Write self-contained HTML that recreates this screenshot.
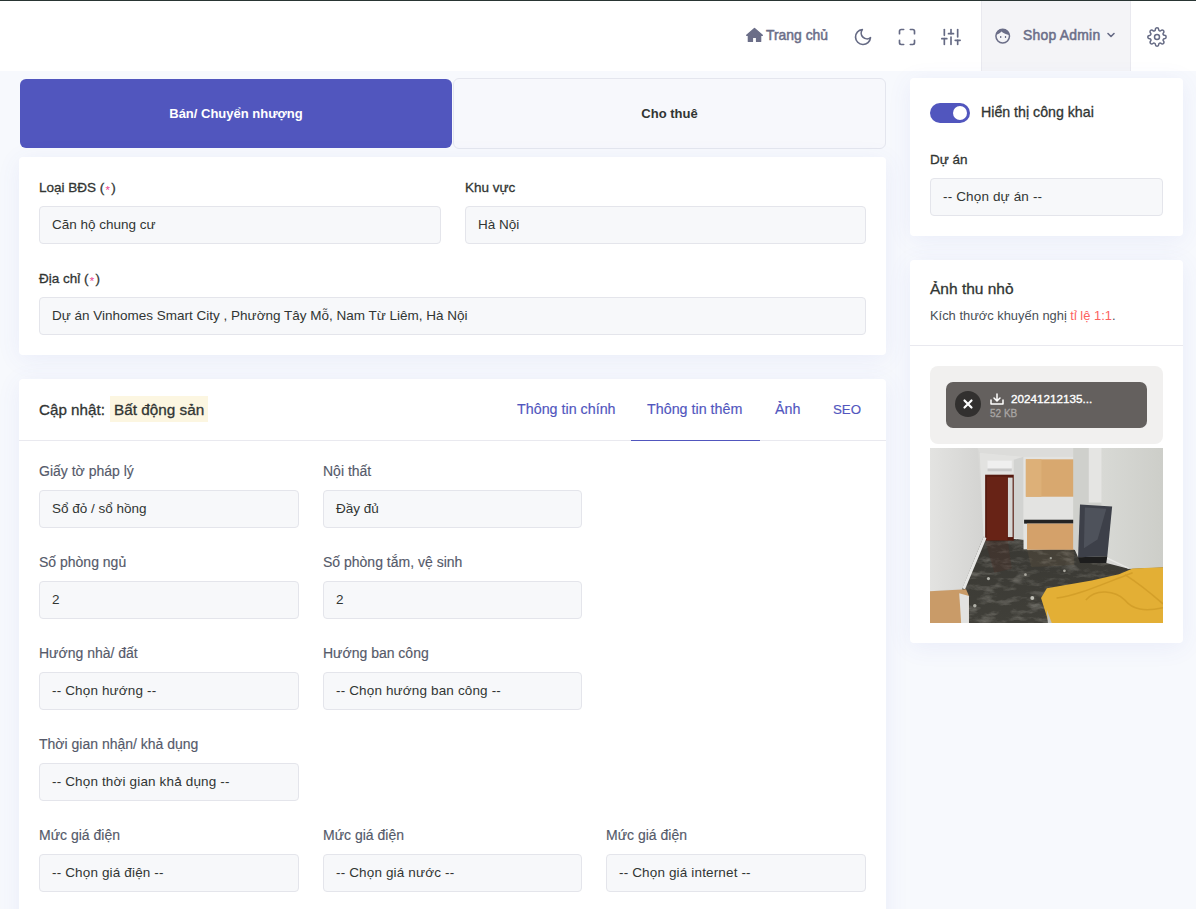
<!DOCTYPE html>
<html lang="vi">
<head>
<meta charset="utf-8">
<title>Cập nhật bất động sản</title>
<style>
*{box-sizing:border-box;margin:0;padding:0}
html,body{width:1196px;height:909px;overflow:hidden}
body{background:#f7f9fd;font-family:"Liberation Sans",sans-serif;color:#313533;position:relative}
.abs{position:absolute}
.topline{left:0;top:0;width:1196px;height:1px;background:#293533}
.header{left:0;top:1px;width:1196px;height:70px;background:#fff}
.hitem{position:absolute;color:#6b6e88;font-weight:400;font-size:13.9px;white-space:nowrap;line-height:16px;-webkit-text-stroke:0.5px #6b6e88}
.ico{position:absolute;fill:none;stroke:#656a84;stroke-width:2;stroke-linecap:round;stroke-linejoin:round}
.userbox{left:981px;top:1px;width:150px;height:70px;background:#f4f4f7;border-left:1px solid #e9e9ef;border-right:1px solid #e9e9ef}
.card{position:absolute;background:#fff;border-radius:4px;box-shadow:0 4px 24px rgba(72,94,200,.08)}
.tabbtn{position:absolute;border-radius:6px;text-align:center;font-weight:700;font-size:13px;white-space:nowrap}
.lbl{position:absolute;font-weight:400;font-size:13.5px;line-height:16px;white-space:nowrap;color:#313533;-webkit-text-stroke:0.3px #313533}
.lbl2{position:absolute;font-weight:400;font-size:14px;line-height:16px;white-space:nowrap;color:#555a6a;-webkit-text-stroke:0.15px #555a6a}
.inp{position:absolute;height:38px;background:#f7f8fa;border:1px solid #e4e5eb;border-radius:4px;font-size:13.5px;line-height:35px;padding-left:12px;color:#313533;white-space:nowrap;overflow:hidden}
.req{color:#e83e8c;font-family:"Liberation Mono",monospace;font-size:11.5px;-webkit-text-stroke:0;position:relative;top:2px}
.ntab{position:absolute;top:401px;font-size:14.3px;line-height:16px;color:#5156be;white-space:nowrap;-webkit-text-stroke:0.15px #5156be}
</style>
</head>
<body>
<div class="abs topline"></div>
<div class="abs header"></div>

<!-- header items -->
<svg class="abs" style="left:745px;top:27px" width="19" height="16" viewBox="0 0 19 16"><path d="M9.5 1.6 L17.3 8.2 L15.6 8.2 L15.6 14.4 L11.6 14.4 L11.6 10.4 L7.4 10.4 L7.4 14.4 L3.4 14.4 L3.4 8.2 L1.7 8.2 Z" fill="#6b6e88" stroke="#6b6e88" stroke-width="1.4" stroke-linejoin="round"/></svg>
<div class="hitem" style="left:766px;top:27px">Trang chủ</div>

<svg class="ico" style="left:853px;top:27px" width="20" height="20" viewBox="0 0 24 24"><path d="M21 12.79A9 9 0 1 1 11.21 3 7 7 0 0 0 21 12.79z"/></svg>
<svg class="ico" style="left:897px;top:27px" width="20" height="20" viewBox="0 0 24 24"><path d="M8 3H5a2 2 0 0 0-2 2v3m18 0V5a2 2 0 0 0-2-2h-3m0 18h3a2 2 0 0 0 2-2v-3M3 16v3a2 2 0 0 0 2 2h3"/></svg>
<svg class="ico" style="left:941px;top:27px" width="20" height="20" viewBox="0 0 24 24"><line x1="4" y1="21" x2="4" y2="14"/><line x1="4" y1="10" x2="4" y2="3"/><line x1="12" y1="21" x2="12" y2="12"/><line x1="12" y1="8" x2="12" y2="3"/><line x1="20" y1="21" x2="20" y2="16"/><line x1="20" y1="12" x2="20" y2="3"/><line x1="1" y1="14" x2="7" y2="14"/><line x1="9" y1="8" x2="15" y2="8"/><line x1="17" y1="16" x2="23" y2="16"/></svg>

<div class="abs userbox"></div>
<svg class="abs" style="left:990px;top:24px" width="28" height="24" viewBox="0 0 28 24"><circle cx="12.7" cy="12.1" r="6.8" fill="none" stroke="#6b6e88" stroke-width="1.5"/><path d="M6.2 10.8 C6.5 7 9 5.3 12.7 5.3 C16.5 5.3 19 7.3 19.3 10.9 C16.5 10.6 13.5 9.6 11.3 7.6 C10 9.3 8.5 10.4 6.2 10.8Z" fill="#6b6e88"/><rect x="10.1" y="12" width="1.2" height="2" fill="#6b6e88"/><rect x="14.9" y="12" width="1.2" height="2" fill="#6b6e88"/></svg>
<div class="hitem" style="left:1023px;top:27px;letter-spacing:.25px">Shop Admin</div>
<svg class="ico" style="left:1106px;top:31px;stroke-width:1.6" width="10" height="8" viewBox="0 0 10 8"><path d="M2 2.5 L5 5.5 L8 2.5"/></svg>
<svg class="ico" style="left:1147px;top:27px;stroke-width:1.8" width="20" height="20" viewBox="0 0 24 24"><circle cx="12" cy="12" r="3"/><path d="M19.4 15a1.65 1.65 0 0 0 .33 1.820l.06.06a2 2 0 0 1 0 2.830 2 2 0 0 1-2.830 0l-.06-.06a1.650 1.650 0 0 0-1.820-.33 1.650 1.650 0 0 0-1 1.510V21a2 2 0 0 1-2 2 2 2 0 0 1-2-2v-.09A1.650 1.650 0 0 0 9 19.4a1.650 1.650 0 0 0-1.820.33l-.06.06a2 2 0 0 1-2.830 0 2 2 0 0 1 0-2.830l.06-.06a1.650 1.650 0 0 0 .33-1.820 1.650 1.650 0 0 0-1.510-1H3a2 2 0 0 1-2-2 2 2 0 0 1 2-2h.09A1.650 1.650 0 0 0 4.6 9a1.650 1.650 0 0 0-.33-1.820l-.06-.06a2 2 0 0 1 0-2.830 2 2 0 0 1 2.830 0l.06.06a1.650 1.650 0 0 0 1.820.33H9a1.650 1.650 0 0 0 1-1.510V3a2 2 0 0 1 2-2 2 2 0 0 1 2 2v.09a1.650 1.650 0 0 0 1 1.510 1.650 1.650 0 0 0 1.820-.33l.06-.06a2 2 0 0 1 2.830 0 2 2 0 0 1 0 2.830l-.06.06a1.650 1.650 0 0 0-.33 1.820V9a1.650 1.650 0 0 0 1.510 1H21a2 2 0 0 1 2 2 2 2 0 0 1-2 2h-.09a1.650 1.650 0 0 0-1.510 1z"/></svg>

<!-- tab buttons -->
<div class="tabbtn" style="left:20px;top:79px;width:432px;height:69px;background:#5156be;color:#fff;line-height:69px">Bán/ Chuyển nhượng</div>
<div class="tabbtn" style="left:453px;top:78px;width:433px;height:71px;background:#f7f8fc;border:1px solid #e4e6ee;color:#313533;line-height:69px">Cho thuê</div>

<!-- card 1 -->
<div class="card" style="left:19px;top:157px;width:867px;height:198px"></div>
<div class="lbl" style="left:39px;top:180px">Loại BĐS (<span class="req">*</span>)</div>
<div class="inp" style="left:39px;top:206px;width:402px">Căn hộ chung cư</div>
<div class="lbl" style="left:465px;top:180px">Khu vực</div>
<div class="inp" style="left:465px;top:206px;width:401px">Hà Nội</div>
<div class="lbl" style="left:39px;top:271px">Địa chỉ (<span class="req">*</span>)</div>
<div class="inp" style="left:39px;top:297px;width:827px">Dự án Vinhomes Smart City , Phường Tây Mỗ, Nam Từ Liêm, Hà Nội</div>

<!-- card 2 -->
<div class="card" style="left:19px;top:379px;width:867px;height:560px"></div>
<div class="abs" style="left:39px;top:400.5px;font-size:15.2px;line-height:18px;white-space:nowrap;-webkit-text-stroke:0.3px #313533">Cập nhật:</div>
<div class="abs" style="left:110px;top:396px;width:98px;height:26px;background:#fcf6e1"></div>
<div class="abs" style="left:114px;top:400.5px;font-size:15.3px;line-height:18px;white-space:nowrap;-webkit-text-stroke:0.3px #313533">Bất động sản</div>
<div class="ntab" style="left:517px">Thông tin chính</div>
<div class="ntab" style="left:647px">Thông tin thêm</div>
<div class="ntab" style="left:775px">Ảnh</div>
<div class="ntab" style="left:833px;font-size:13.3px;top:402px">SEO</div>
<div class="abs" style="left:19px;top:440px;width:867px;height:1px;background:#e9e9ef"></div>
<div class="abs" style="left:631px;top:440px;width:129px;height:1px;background:#5156be"></div>

<div class="lbl2" style="left:39px;top:463px">Giấy tờ pháp lý</div>
<div class="inp" style="left:39px;top:490px;width:260px">Sổ đỏ / sổ hồng</div>
<div class="lbl2" style="left:323px;top:463px">Nội thất</div>
<div class="inp" style="left:323px;top:490px;width:259px">Đầy đủ</div>

<div class="lbl2" style="left:39px;top:554px">Số phòng ngủ</div>
<div class="inp" style="left:39px;top:581px;width:260px">2</div>
<div class="lbl2" style="left:323px;top:554px">Số phòng tắm, vệ sinh</div>
<div class="inp" style="left:323px;top:581px;width:259px">2</div>

<div class="lbl2" style="left:39px;top:645px">Hướng nhà/ đất</div>
<div class="inp" style="left:39px;top:672px;width:260px;letter-spacing:.15px">-- Chọn hướng --</div>
<div class="lbl2" style="left:323px;top:645px">Hướng ban công</div>
<div class="inp" style="left:323px;top:672px;width:259px;letter-spacing:.15px">-- Chọn hướng ban công --</div>

<div class="lbl2" style="left:39px;top:736px">Thời gian nhận/ khả dụng</div>
<div class="inp" style="left:39px;top:763px;width:260px;letter-spacing:.15px">-- Chọn thời gian khả dụng --</div>

<div class="lbl2" style="left:39px;top:827px">Mức giá điện</div>
<div class="inp" style="left:39px;top:854px;width:260px;letter-spacing:.15px">-- Chọn giá điện --</div>
<div class="lbl2" style="left:323px;top:827px">Mức giá điện</div>
<div class="inp" style="left:323px;top:854px;width:259px;letter-spacing:.15px">-- Chọn giá nước --</div>
<div class="lbl2" style="left:606px;top:827px">Mức giá điện</div>
<div class="inp" style="left:606px;top:854px;width:260px;letter-spacing:.15px">-- Chọn giá internet --</div>

<!-- sidebar card 1 -->
<div class="card" style="left:910px;top:78px;width:273px;height:158px"></div>
<div class="abs" style="left:930px;top:103px;width:40px;height:20px;border-radius:10px;background:#5156be"></div>
<div class="abs" style="left:953px;top:106px;width:14px;height:14px;border-radius:7px;background:#fff"></div>
<div class="lbl" style="left:981px;top:104px;font-size:14.2px">Hiển thị công khai</div>
<div class="lbl" style="left:930px;top:152px">Dự án</div>
<div class="inp" style="left:930px;top:178px;width:233px;letter-spacing:.15px">-- Chọn dự án --</div>

<!-- sidebar card 2 -->
<div class="card" style="left:910px;top:260px;width:273px;height:383px"></div>
<div class="abs" style="left:930px;top:279.5px;font-size:15.5px;line-height:18px;white-space:nowrap;-webkit-text-stroke:0.3px #313533">Ảnh thu nhỏ</div>
<div class="abs" style="left:930px;top:307.5px;font-size:12.9px;line-height:16px;white-space:nowrap;color:#495057">Kích thước khuyến nghị <span style="color:#fd625e">tỉ lệ 1:1</span>.</div>
<div class="abs" style="left:910px;top:345px;width:273px;height:1px;background:#e9e9ef"></div>

<div class="abs" style="left:930px;top:366px;width:233px;height:78px;border-radius:8px;background:#f1f0ef"></div>
<div class="abs" style="left:946px;top:382px;width:201px;height:46px;border-radius:7px;background:#64605e"></div>
<div class="abs" style="left:955px;top:391px;width:26px;height:26px;border-radius:13px;background:#32302f"></div>
<svg class="abs" style="left:955px;top:391px" width="26" height="26" viewBox="0 0 26 26"><path d="M9.5 9.5 L16.5 16.5 M16.5 9.5 L9.5 16.5" stroke="#fff" stroke-width="2.2" stroke-linecap="round"/></svg>
<svg class="abs" style="left:990px;top:393px" width="14" height="12" viewBox="0 0 14 12"><path d="M7 1 V7.5 M4 5 L7 8 L10 5 M1 7 V11 H13 V7" fill="none" stroke="#fff" stroke-width="1.5" stroke-linecap="round" stroke-linejoin="round"/></svg>
<div class="abs" style="left:1011px;top:392px;font-size:11.7px;font-weight:400;line-height:14px;color:#fff;white-space:nowrap;-webkit-text-stroke:0.35px #fff">20241212135...</div>
<div class="abs" style="left:990px;top:408px;font-size:10px;font-weight:400;line-height:12px;color:#a9a6a4;white-space:nowrap;-webkit-text-stroke:0.3px #a9a6a4">52 KB</div>

<!-- photo -->
<svg class="abs" style="left:930px;top:448px" width="233" height="175" viewBox="0 0 1196 898" preserveAspectRatio="none">
<defs>
<linearGradient id="lw" x1="0" y1="0" x2="1" y2="0"><stop offset="0" stop-color="#e3e3e1"/><stop offset="1" stop-color="#d3d3d1"/></linearGradient>
<linearGradient id="rw" x1="0" y1="0" x2="1" y2="0"><stop offset="0" stop-color="#d8d9d5"/><stop offset="1" stop-color="#cdcec9"/></linearGradient>
<linearGradient id="fl" x1="0" y1="0" x2="0" y2="1"><stop offset="0" stop-color="#393833"/><stop offset="1" stop-color="#403f39"/></linearGradient>
</defs>
<rect x="0" y="0" width="1196" height="898" fill="#d8d8d6"/>
<polygon points="272,455 480,470 500,522 740,515 760,560 905,590 1020,620 1196,612 1196,898 200,898 165,720" fill="url(#fl)"/>
<filter id="marble" x="0" y="0" width="100%" height="100%"><feTurbulence type="fractalNoise" baseFrequency="0.012 0.03" numOctaves="4" seed="7"/><feColorMatrix type="matrix" values="0 0 0 0 0.72  0 0 0 0 0.70  0 0 0 0 0.64  2.2 0 0 0 -1.05"/></filter>
<clipPath id="flc"><polygon points="272,455 480,470 500,522 740,515 760,560 905,590 1020,620 1196,612 1196,898 200,898 165,720"/></clipPath>
<rect x="150" y="440" width="1046" height="458" filter="url(#marble)" clip-path="url(#flc)" opacity=".32"/>
<polygon points="283,475 400,478 420,620 330,640" fill="#5a2a20" opacity=".2"/>
<polygon points="498,522 738,518 740,600 520,610" fill="#8a7050" opacity=".15"/>
<circle cx="300" cy="670" r="8" fill="#b5b5ad"/><circle cx="490" cy="650" r="7" fill="#aaa9a0"/><circle cx="525" cy="770" r="10" fill="#c0c0b8"/><circle cx="230" cy="810" r="9" fill="#b0b0a8"/><circle cx="620" cy="565" r="6" fill="#a0a098"/><circle cx="690" cy="630" r="7" fill="#aaa9a0"/>
<polygon points="0,0 245,0 275,455 165,720 0,735" fill="url(#lw)"/>
<polygon points="245,0 830,0 750,45 480,45 255,25" fill="#dcdcda"/>
<polygon points="255,25 480,45 480,470 275,455" fill="#e2e2e0"/>
<polygon points="430,60 480,45 480,470 430,460" fill="#d2d3d1"/>
<rect x="295" y="65" width="125" height="55" fill="#efefef"/>
<rect x="295" y="105" width="125" height="15" fill="#c9c9c9"/>
<rect x="283" y="137" width="147" height="338" fill="#55190f"/>
<rect x="292" y="147" width="106" height="326" fill="#682316"/>
<rect x="400" y="152" width="24" height="305" fill="#d6d6d4"/>
<rect x="480" y="45" width="258" height="475" fill="#e3e3e1"/>
<rect x="492" y="58" width="256" height="192" fill="#d8a86f"/>
<rect x="492" y="58" width="80" height="192" fill="#ddb078"/>
<rect x="483" y="368" width="257" height="20" fill="#232323"/>
<rect x="498" y="388" width="240" height="134" fill="#d4a16a"/>
<polygon points="735,0 885,0 885,585 735,520" fill="#cfd0cc"/>
<rect x="815" y="0" width="72" height="280" fill="#e5e5e3"/>
<polygon points="880,0 1196,0 1196,612 1020,620 880,560" fill="url(#rw)"/>
<polygon points="910,560 1020,615 1020,620 905,568" fill="#e8e8e6"/>
<polygon points="770,290 935,300 910,555 760,560" fill="#3d4049"/>
<polygon points="795,305 905,312 860,470 790,515" fill="#5c606a" opacity=".55"/>
<polygon points="760,560 910,555 905,590 770,590" fill="#1d1d1d"/>
<polygon points="165,720 275,455 290,462 180,725" fill="#e6e6e4"/>
<polygon points="0,735 185,725 200,760 200,898 0,898" fill="#c99b68"/>
<polygon points="150,745 200,760 200,898 160,898" fill="#e2e2e0"/>
<polygon points="570,770 600,720 830,680 970,648 1040,618 1196,612 1196,898 610,898" fill="#e3af35"/>
<path d="M800 780 C850 720 950 730 1000 780 C1040 830 1100 840 1196 820 M650 770 C750 760 880 700 1040 640 M1000 650 C1080 700 1150 760 1196 800" stroke="#c7921f" stroke-width="8" fill="none" opacity=".55"/>
<polygon points="600,830 625,898 605,898" fill="#c0c0bb"/>
</svg>

</body>
</html>
